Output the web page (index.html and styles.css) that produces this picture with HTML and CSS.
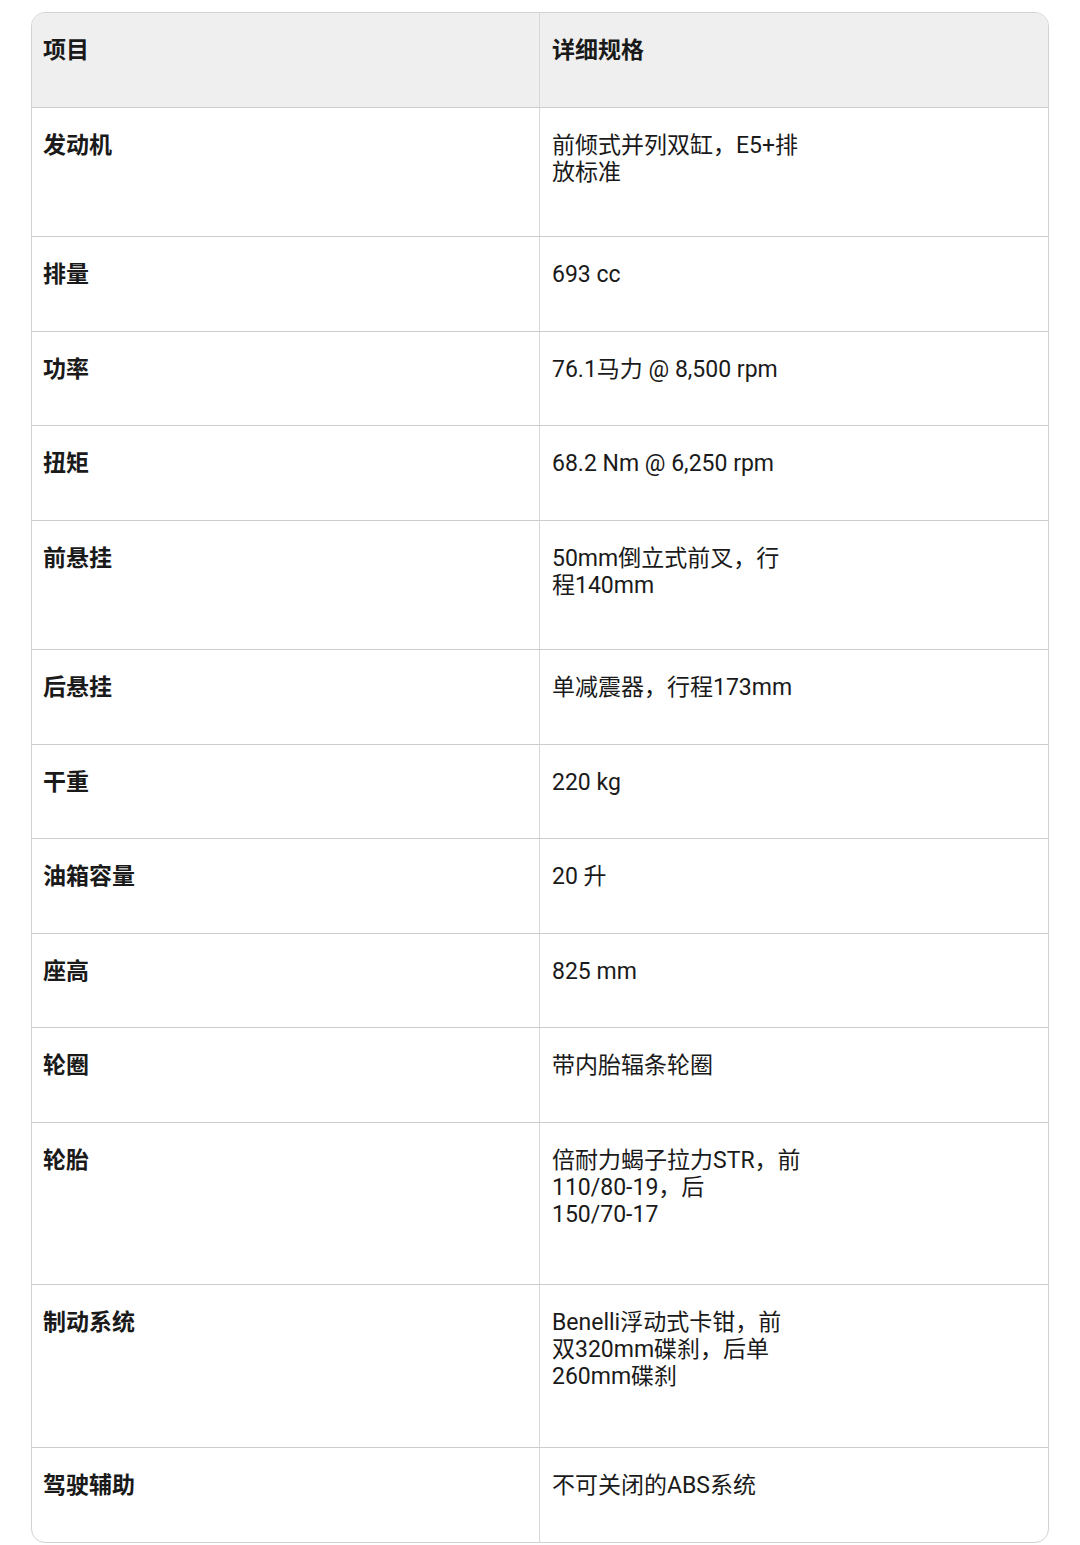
FILE: index.html
```html
<!DOCTYPE html>
<html lang="zh-CN">
<head>
<meta charset="utf-8">
<title>规格</title>
<link rel="stylesheet" href="styles.css">
</head>
<body>
<div class="wrap">
<table class="spec">
  <thead>
    <tr class="r1 head"><th class="k">项目</th><th class="v">详细规格</th></tr>
  </thead>
  <tbody>
    <tr class="r2"><td class="k">发动机</td><td class="v">前倾式并列双缸，E5+排<br>放标准</td></tr>
    <tr class="r1"><td class="k">排量</td><td class="v">693 cc</td></tr>
    <tr class="r1"><td class="k">功率</td><td class="v">76.1马力 @ 8,500 rpm</td></tr>
    <tr class="r1"><td class="k">扭矩</td><td class="v">68.2 Nm @ 6,250 rpm</td></tr>
    <tr class="r2"><td class="k">前悬挂</td><td class="v">50mm倒立式前叉，行<br>程140mm</td></tr>
    <tr class="r1"><td class="k">后悬挂</td><td class="v">单减震器，行程173mm</td></tr>
    <tr class="r1"><td class="k">干重</td><td class="v">220 kg</td></tr>
    <tr class="r1"><td class="k">油箱容量</td><td class="v">20 升</td></tr>
    <tr class="r1"><td class="k">座高</td><td class="v">825 mm</td></tr>
    <tr class="r1"><td class="k">轮圈</td><td class="v">带内胎辐条轮圈</td></tr>
    <tr class="r3"><td class="k">轮胎</td><td class="v">倍耐力蝎子拉力STR，前<br>110/80-19，后<br>150/70-17</td></tr>
    <tr class="r3"><td class="k">制动系统</td><td class="v">Benelli浮动式卡钳，前<br>双320mm碟刹，后单<br>260mm碟刹</td></tr>
    <tr class="r1 last"><td class="k">驾驶辅助</td><td class="v">不可关闭的ABS系统</td></tr>
  </tbody>
</table>
</div>
</body>
</html>
```
FILE: styles.css
```css
html, body {
  margin: 0;
  padding: 0;
  background: #ffffff;
}
body {
  font-family: Roboto, "Noto Sans CJK SC", "Noto Sans", sans-serif;
  color: #1a1a1a;
}
.wrap {
  padding: 12px 31px 0 31px;
}
.spec {
  width: 1018px;
  border-collapse: separate;
  border-spacing: 0;
  border: 1px solid #d2d2d2;
  border-radius: 14px;
  overflow: hidden;
  font-size: 23px;
  line-height: 27px;
}
.spec th, .spec td {
  vertical-align: top;
  text-align: left;
  padding: 24px 12px 0 11px;
  border-bottom: 1.5px solid #cdcdcd;
  box-sizing: border-box;
  white-space: nowrap;
}
.spec .k {
  width: 508px;
  font-weight: 700;
  border-right: 1px solid #d8d8d8;
}
.spec .v {
  padding-left: 12px;
  font-weight: 400;
}
.spec th.v {
  font-weight: 700;
}
.head th {
  background: #efefef;
}
.r1 { height: 94.5px; }
.r2 { height: 129.5px; }
.r3 { height: 162.5px; }
.last td { border-bottom: none; }
```
